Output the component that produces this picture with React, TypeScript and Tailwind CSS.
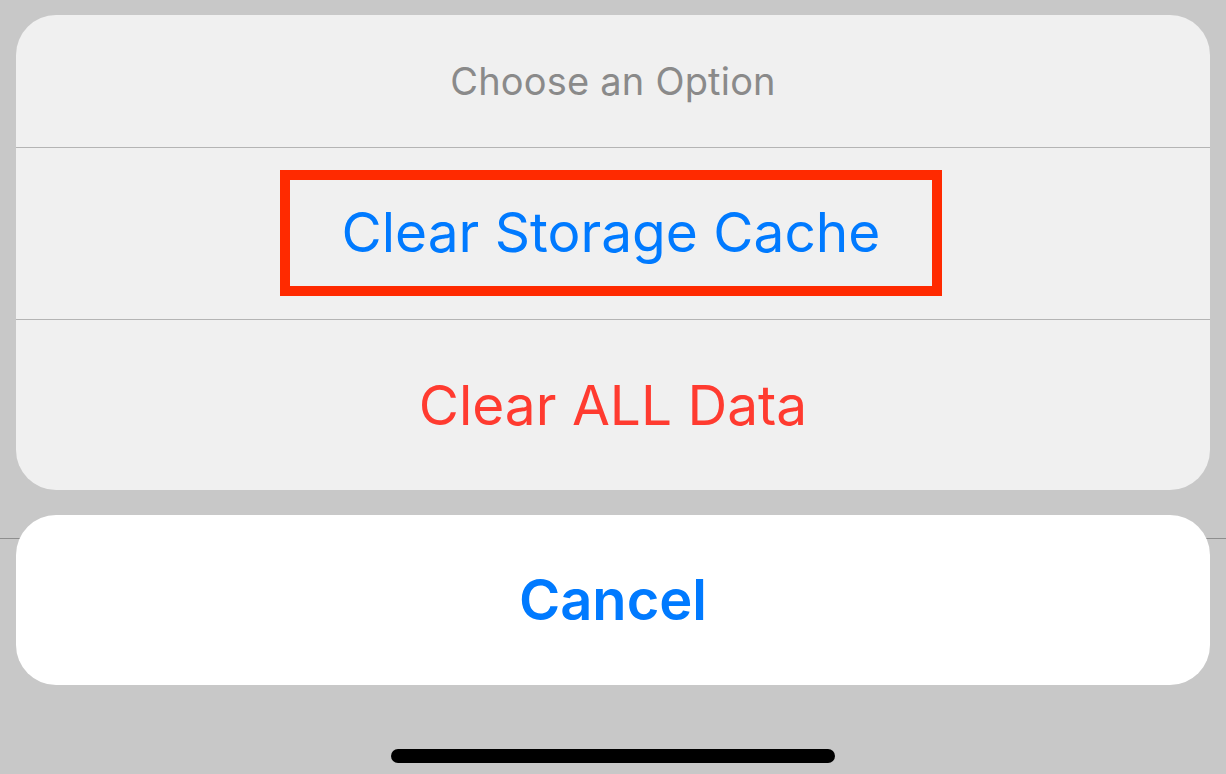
import React from 'react';

const App: React.FC = () => {
  return (
    <div
      className="w-[1226px] h-[774px] bg-[#c8c8c8] relative overflow-hidden flex flex-col"
      style={{ fontFamily: 'Inter, "Liberation Sans", sans-serif' }}
    >
      {/* side hairlines behind the cancel card */}
      <div className="absolute left-0 right-0 top-[538px] h-px bg-[#8e8e8e]"></div>

      <div className="relative z-10 flex flex-col px-4 pt-[15px]">
        {/* Options card */}
        <div className="bg-[#f0f0f0] rounded-[40px] overflow-hidden flex flex-col">
          <div className="h-[132px] flex items-center justify-center text-[#8a8a8a] text-[38px] tracking-[0.2px]">
            Choose an Option
          </div>
          <div className="h-px bg-[#b4b4b4]"></div>
          <div className="h-[171px] flex items-center justify-start pl-[264px]">
            <div className="w-[662px] h-[126px] border-[10px] border-[#ff2a00] flex items-center justify-center text-[#007aff] text-[55px] -mt-[2px]">
              Clear Storage Cache
            </div>
          </div>
          <div className="h-px bg-[#b4b4b4]"></div>
          <div className="h-[170px] flex items-center justify-center text-[#ff3b30] text-[55px]">
            Clear ALL Data
          </div>
        </div>

        {/* Cancel card */}
        <div className="mt-[25px] bg-white rounded-[40px] h-[170px] flex items-center justify-center text-[#007aff] text-[56px] font-semibold">
          Cancel
        </div>
      </div>

      <div className="flex-1 flex items-end justify-center pb-[11px]">
        <div className="w-[444px] h-[14px] rounded-full bg-black"></div>
      </div>
    </div>
  );
};

export default App;
